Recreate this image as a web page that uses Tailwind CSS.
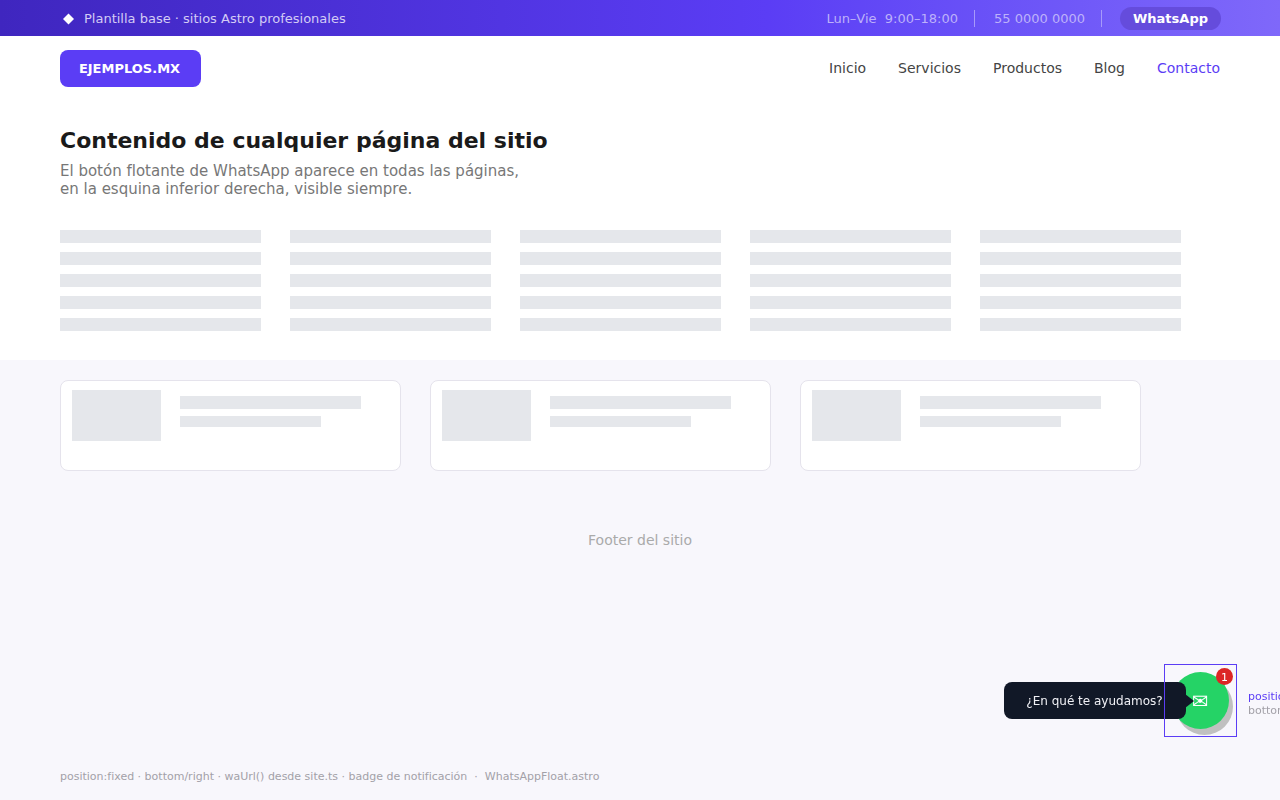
<!DOCTYPE html>
<html lang="es">
<head>
    <meta charset="UTF-8">
    <meta name="viewport" content="width=device-width, initial-scale=1.0">
    <title>Plantilla base - WhatsAppFloat</title>
    <script src="https://cdn.jsdelivr.net/npm/@tailwindcss/browser@4"></script>
</head>
<body class="bg-[#f8f7fc] min-h-screen flex flex-col overflow-x-hidden font-['DejaVu_Sans',sans-serif]">
    <!-- Top bar -->
    <div class="h-9 pt-px pl-[60px] pr-[59px] flex items-center justify-between text-[13px] bg-linear-to-r from-[#3f26bf] via-[#5b3df5] via-60% to-[#7f68fa]">
        <div class="flex items-center gap-2 text-[#d3cbf5]">
            <svg class="w-4 h-4" viewBox="0 0 16 16" fill="white" aria-hidden="true"><path d="M8.500 2.500L14 8L8.500 13.500L3 8Z"/></svg>
            <span>Plantilla base · sitios Astro profesionales</span>
        </div>
        <div class="flex items-center text-[#bdb1fa]">
            <span class="whitespace-pre">Lun–Vie  9:00–18:00</span>
            <span class="w-px h-[17px] ml-4 mr-[19px] bg-[#a79afa]"></span>
            <span>55 0000 0000</span>
            <span class="w-px h-[17px] ml-4 mr-[18px] bg-[#a79afa]"></span>
            <a href="#" class="h-[23px] px-[13px] flex items-center rounded-full bg-[#654cdc] text-white font-bold">WhatsApp</a>
        </div>
    </div>

    <!-- Navbar -->
    <header class="bg-white h-16 px-[60px] flex items-center justify-between">
        <a href="#" class="h-[37px] w-[141px] pt-px pr-[2px] flex items-center justify-center rounded-lg bg-[#5b3df5] text-white text-[13px] font-bold">EJEMPLOS.MX</a>
        <nav class="flex gap-8 text-sm text-[#444444]">
            <a href="#">Inicio</a>
            <a href="#">Servicios</a>
            <a href="#">Productos</a>
            <a href="#">Blog</a>
            <a href="#" class="text-[#5b3df5]">Contacto</a>
        </nav>
    </header>

    <!-- Page content -->
    <main>
        <section class="bg-white pt-[27px] pl-[60px] pr-[99px] pb-[29px]">
            <h1 class="text-[22px] leading-7 font-bold text-[#1a1a1a]">Contenido de cualquier página del sitio</h1>
            <p class="mt-[7px] text-[15px] leading-[18px] text-[#777777]">El botón flotante de WhatsApp aparece en todas las páginas,<br>en la esquina inferior derecha, visible siempre.</p>
            <div class="mt-8 grid grid-cols-5 gap-x-[29px] gap-y-[9px]">
                <div class="h-[13px] bg-[#e5e7eb]"></div>
                <div class="h-[13px] bg-[#e5e7eb]"></div>
                <div class="h-[13px] bg-[#e5e7eb]"></div>
                <div class="h-[13px] bg-[#e5e7eb]"></div>
                <div class="h-[13px] bg-[#e5e7eb]"></div>
                <div class="h-[13px] bg-[#e5e7eb]"></div>
                <div class="h-[13px] bg-[#e5e7eb]"></div>
                <div class="h-[13px] bg-[#e5e7eb]"></div>
                <div class="h-[13px] bg-[#e5e7eb]"></div>
                <div class="h-[13px] bg-[#e5e7eb]"></div>
                <div class="h-[13px] bg-[#e5e7eb]"></div>
                <div class="h-[13px] bg-[#e5e7eb]"></div>
                <div class="h-[13px] bg-[#e5e7eb]"></div>
                <div class="h-[13px] bg-[#e5e7eb]"></div>
                <div class="h-[13px] bg-[#e5e7eb]"></div>
                <div class="h-[13px] bg-[#e5e7eb]"></div>
                <div class="h-[13px] bg-[#e5e7eb]"></div>
                <div class="h-[13px] bg-[#e5e7eb]"></div>
                <div class="h-[13px] bg-[#e5e7eb]"></div>
                <div class="h-[13px] bg-[#e5e7eb]"></div>
                <div class="h-[13px] bg-[#e5e7eb]"></div>
                <div class="h-[13px] bg-[#e5e7eb]"></div>
                <div class="h-[13px] bg-[#e5e7eb]"></div>
                <div class="h-[13px] bg-[#e5e7eb]"></div>
                <div class="h-[13px] bg-[#e5e7eb]"></div>
            </div>
        </section>

        <!-- Cards -->
        <section class="pt-5 pl-[60px] pr-[139px] grid grid-cols-3 gap-[29px]">
            <div class="flex gap-[19px] bg-white border border-[#e5e3ec] rounded-lg pt-[9px] px-[11px] pb-[29px]">
                <div class="w-[89px] h-[51px] bg-[#e5e7eb]"></div>
                <div class="pt-1.5 flex flex-col gap-[7px]">
                    <div class="w-[181px] h-[13px] bg-[#e5e7eb]"></div>
                    <div class="w-[141px] h-[11px] bg-[#e5e7eb]"></div>
                </div>
            </div>
            <div class="flex gap-[19px] bg-white border border-[#e5e3ec] rounded-lg pt-[9px] px-[11px] pb-[29px]">
                <div class="w-[89px] h-[51px] bg-[#e5e7eb]"></div>
                <div class="pt-1.5 flex flex-col gap-[7px]">
                    <div class="w-[181px] h-[13px] bg-[#e5e7eb]"></div>
                    <div class="w-[141px] h-[11px] bg-[#e5e7eb]"></div>
                </div>
            </div>
            <div class="flex gap-[19px] bg-white border border-[#e5e3ec] rounded-lg pt-[9px] px-[11px] pb-[29px]">
                <div class="w-[89px] h-[51px] bg-[#e5e7eb]"></div>
                <div class="pt-1.5 flex flex-col gap-[7px]">
                    <div class="w-[181px] h-[13px] bg-[#e5e7eb]"></div>
                    <div class="w-[141px] h-[11px] bg-[#e5e7eb]"></div>
                </div>
            </div>
        </section>
    </main>

    <!-- Footer -->
    <footer class="pt-[59px] flex-grow flex flex-col justify-between">
        <p class="text-center text-sm text-[#aaaaaa]">Footer del sitio</p>
        <p class="px-[60px] pb-[15px] text-[11px] leading-4 text-[#a3a1a8] whitespace-pre">position:fixed · bottom/right · waUrl() desde site.ts · badge de notificación  ·  WhatsAppFloat.astro</p>
    </footer>

    <!-- WhatsApp floating button -->
    <div class="fixed right-[43px] bottom-[63px] w-[73px] h-[73px]">
        <a href="#" aria-label="WhatsApp" class="absolute left-2 top-2 w-[57px] h-[57px] rounded-full bg-[#25d366] shadow-[4px_6px_0_#c0c0c0] flex items-center justify-center text-white text-xl leading-none">✉</a>
        <div class="absolute right-[51px] top-[18px] h-[37px] w-[182px] pr-[1px] flex items-center justify-center rounded-lg bg-[#111827] text-[#f0f0f5] text-xs whitespace-nowrap">
            ¿En qué te ayudamos?
            <svg class="absolute left-full top-3 w-2 h-4" viewBox="0 0 8 16" fill="#111827" aria-hidden="true"><path d="M-1 0L8 7L-1 14Z"/></svg>
        </div>
        <span class="absolute right-1 top-1 w-[17px] h-[17px] pt-px rounded-full bg-[#dc2626] text-white text-[11px] leading-none flex items-center justify-center">1</span>
        <div class="absolute inset-0 border border-[#5b3df5] pointer-events-none"></div>
        <div class="absolute left-[84px] top-[26px] text-[11px] leading-[14px] whitespace-nowrap text-[#a3a1a8]">
            <p class="text-[#5b3df5]">position:fixed</p>
            <p>bottom/right</p>
        </div>
    </div>
</body>
</html>
